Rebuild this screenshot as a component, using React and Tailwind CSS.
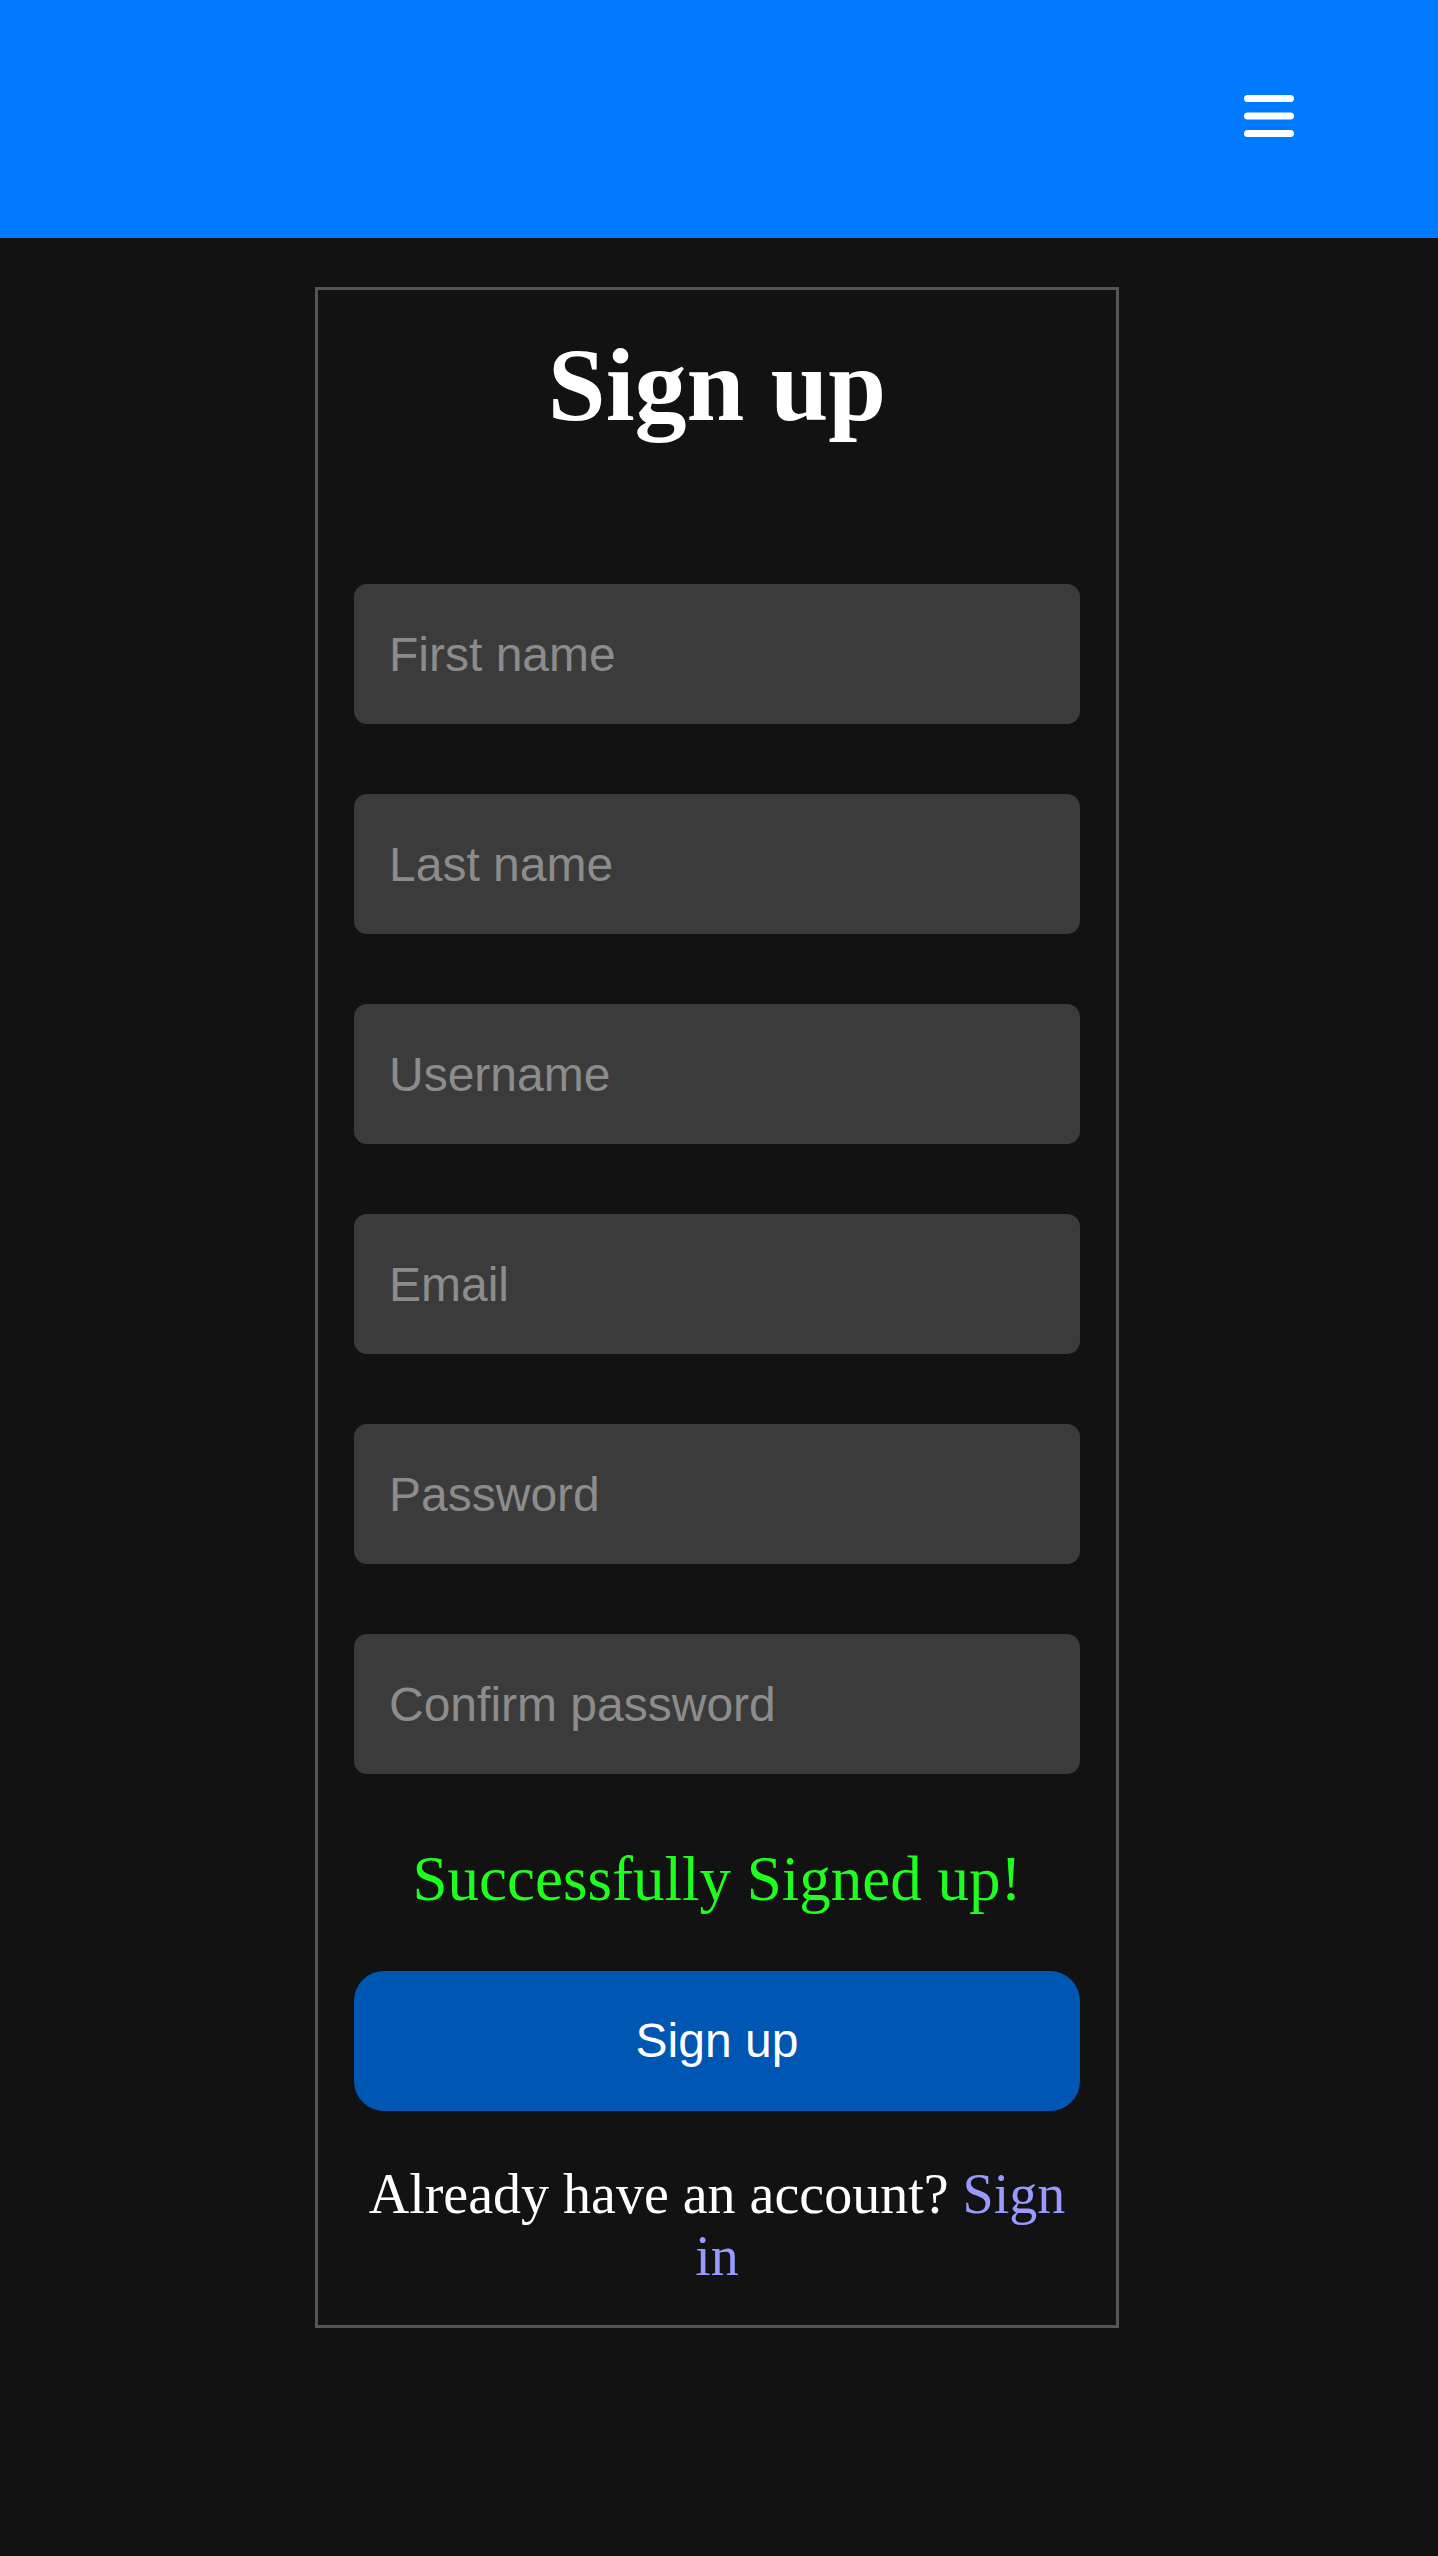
import { useState } from 'react';

const fields = [
  { name: 'firstName', placeholder: 'First name', type: 'text' },
  { name: 'lastName', placeholder: 'Last name', type: 'text' },
  { name: 'username', placeholder: 'Username', type: 'text' },
  { name: 'email', placeholder: 'Email', type: 'email' },
  { name: 'password', placeholder: 'Password', type: 'password' },
  { name: 'confirm', placeholder: 'Confirm password', type: 'password' },
];

function MenuIcon() {
  return (
    <svg width="50" height="42" viewBox="0 0 50 42" fill="none" stroke="white" strokeWidth="7" strokeLinecap="round">
      <line x1="3.5" y1="3.5" x2="46.5" y2="3.5" />
      <line x1="3.5" y1="21" x2="46.5" y2="21" />
      <line x1="3.5" y1="38.5" x2="46.5" y2="38.5" />
    </svg>
  );
}

export default function App() {
  const [values, setValues] = useState({});

  return (
    <div className="min-h-[2556px] bg-[#121212] pb-10">
      <header className="h-[238px] bg-[#007bff] flex items-start justify-end pr-[144px] pt-[95px]">
        <button className="cursor-pointer">
          <MenuIcon />
        </button>
      </header>

      <div className="w-[804px] ml-[315px] mt-[49px] border-[3px] border-[#555555] bg-[#121212] px-[36px] pt-[36px] pb-[38px]">
        <h1 className="text-center text-white font-bold text-[104px] leading-[118px] font-['Liberation_Serif',serif]">
          Sign up
        </h1>

        <form className="mt-[140px] flex flex-col gap-[70px]" onSubmit={(e) => e.preventDefault()}>
          {fields.map((f) => (
            <input
              key={f.name}
              type={f.type}
              placeholder={f.placeholder}
              value={values[f.name] || ''}
              onChange={(e) => setValues({ ...values, [f.name]: e.target.value })}
              className="h-[140px] w-full rounded-[13px] bg-[#3b3b3b] pl-[35px] text-[48px] text-white placeholder:text-[#8c8c8c] outline-none font-['Liberation_Sans',sans-serif]"
            />
          ))}
        </form>

        <p className="mt-[70px] text-center text-[63px] leading-[71px] text-[#1eff1e] font-['Liberation_Serif',serif]">
          Successfully Signed up!
        </p>

        <button className="mt-[56px] h-[140px] w-full rounded-[30px] bg-[#0056b3] text-white text-[48px] font-['Liberation_Sans',sans-serif]">
          Sign up
        </button>

        <p className="mt-[52px] text-center text-white text-[56px] leading-[62px] font-['Liberation_Serif',serif]">
          Already have an account?{' '}
          <a href="#" className="text-[#9999ff]">Sign in</a>
        </p>
      </div>
    </div>
  );
}
